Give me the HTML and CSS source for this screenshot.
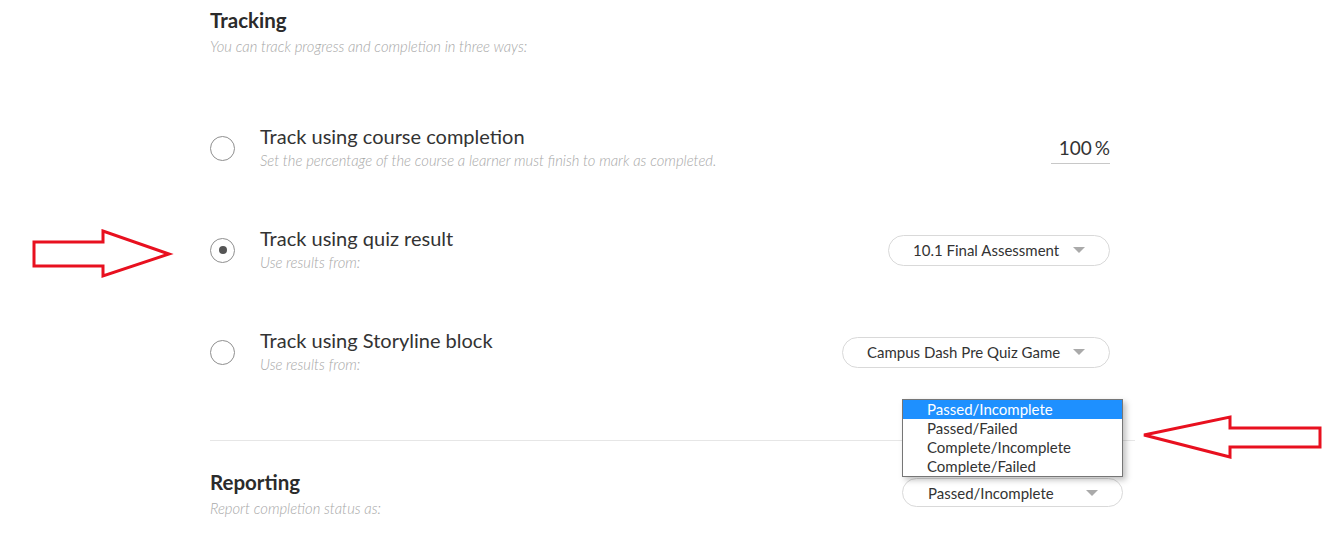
FILE: index.html
```html
<!DOCTYPE html>
<html>
<head>
<meta charset="utf-8">
<link rel="stylesheet" href="styles.css">
</head>
<body>
<div class="page">
  <section class="tracking">
    <h2 class="sec-title">Tracking</h2>
    <p class="sec-sub">You can track progress and completion in three ways:</p>
    <div class="rows">
      <div class="row">
        <span class="radio"></span>
        <div class="row-text">
          <div class="row-title">Track using course completion</div>
          <div class="row-sub">Set the percentage of the course a learner must finish to mark as completed.</div>
        </div>
        <div class="pct">100<span class="pct-sign">%</span></div>
      </div>
      <div class="row">
        <span class="radio checked"></span>
        <div class="row-text">
          <div class="row-title">Track using quiz result</div>
          <div class="row-sub">Use results from:</div>
        </div>
        <div class="select sel-quiz"><span>10.1 Final Assessment</span><i class="caret"></i></div>
      </div>
      <div class="row">
        <span class="radio"></span>
        <div class="row-text">
          <div class="row-title">Track using Storyline block</div>
          <div class="row-sub">Use results from:</div>
        </div>
        <div class="select sel-story"><span>Campus Dash Pre Quiz Game</span><i class="caret"></i></div>
      </div>
    </div>
  </section>
  <hr class="divider">
  <section class="reporting">
    <div class="rep-text">
      <h2 class="sec-title">Reporting</h2>
      <p class="sec-sub">Report completion status as:</p>
    </div>
    <div class="rep-control">
      <div class="select sel-rep"><span>Passed/Incomplete</span><i class="caret"></i></div>
      <ul class="listbox">
        <li class="hl">Passed/Incomplete</li>
        <li>Passed/Failed</li>
        <li>Complete/Incomplete</li>
        <li>Complete/Failed</li>
      </ul>
    </div>
  </section>
</div>
<svg class="arrow arrow-right" width="142" height="52" viewBox="0 0 142 52">
  <polygon points="2,13 71,13 71,2 137,25 71,47 71,37 2,37" fill="#fff" stroke="#e8101f" stroke-width="3"/>
</svg>
<svg class="arrow arrow-left" width="182" height="46" viewBox="0 0 182 46">
  <polygon points="4,20 90,2 90,13 180,13 180,32 90,32 90,42" fill="#fff" stroke="#e8101f" stroke-width="3"/>
</svg>
</body>
</html>
```
FILE: styles.css
```css
html, body {
  margin: 0;
  padding: 0;
  background: #fff;
}
body {
  font-family: Lato, "Open Sans", sans-serif;
  color: #333;
  width: 1340px;
  height: 543px;
  overflow: hidden;
  position: relative;
}
.page {
  margin-left: 210px;
  width: 925px;
}
.sec-title {
  margin: 0;
  font-size: 20.5px;
  font-weight: 700;
  line-height: 24px;
  color: #2b2b2b;
}
.sec-sub {
  margin: 4px 0 0;
  font-size: 14.8px;
  font-style: italic;
  font-weight: 300;
  color: #a8a8a8;
  line-height: 20px;
}
.tracking {
  padding-top: 8px;
}
.rows {
  margin-top: 41px;
  width: 900px;
}
.row {
  height: 102px;
  display: flex;
  align-items: center;
}
.radio {
  width: 23px;
  height: 23px;
  border: 1px solid #8f8f8f;
  border-radius: 50%;
  flex: none;
  display: flex;
  align-items: center;
  justify-content: center;
  background: #fff;
}
.radio.checked::after {
  content: "";
  width: 8px;
  height: 8px;
  border-radius: 50%;
  background: #555;
}
.row-text {
  margin-left: 25px;
  flex: 1;
}
.row-title {
  font-size: 20px;
  line-height: 24px;
  color: #333;
  margin-top: -2px;
}
.row-sub {
  font-size: 14.8px;
  font-style: italic;
  font-weight: 300;
  color: #a8a8a8;
  line-height: 20px;
  margin-top: 2px;
}
.pct {
  width: 59px;
  border-bottom: 1px solid #c8c8c8;
  text-align: right;
  font-size: 19px;
  line-height: 26px;
  color: #333;
  padding-bottom: 2px;
  margin-top: 2px;
  box-sizing: border-box;
}
.pct-sign {
  margin-left: 3px;
}
.select {
  height: 31px;
  box-sizing: border-box;
  border: 1px solid #d9d9d9;
  border-radius: 16px;
  display: flex;
  align-items: center;
  font-size: 15px;
  color: #333;
  background: #fff;
}
.select span {
  flex: 1;
}
.caret {
  width: 0;
  height: 0;
  border-left: 6px solid transparent;
  border-right: 6px solid transparent;
  border-top: 6px solid #aaa;
  margin-right: 24px;
}
.sel-quiz {
  width: 222px;
  padding-left: 24px;
}
.sel-story {
  width: 268px;
  padding-left: 24px;
}
.divider {
  margin: 37px 0 0;
  border: 0;
  border-top: 1px solid #e6e6e6;
  width: 925px;
}
.reporting {
  display: flex;
  justify-content: space-between;
  padding-top: 29px;
  width: 913px;
}
.rep-control {
  position: relative;
  margin-top: 8px;
}
.sel-rep {
  width: 221px;
  height: 29px;
  padding-left: 25px;
  border-radius: 15px;
}
.listbox {
  position: absolute;
  left: 0;
  top: -79px;
  width: 221px;
  margin: 0;
  padding: 0;
  list-style: none;
  border: 1px solid #767676;
  box-sizing: border-box;
  background: #fff;
  box-shadow: 3px 3px 6px rgba(0,0,0,0.25);
  font-size: 15px;
  color: #333;
}
.listbox li {
  height: 19px;
  line-height: 19px;
  padding-left: 24px;
}
.listbox li.hl {
  background: #1e90ff;
  color: #fff;
}
.arrow {
  position: absolute;
}
.arrow-right {
  left: 32px;
  top: 229px;
}
.arrow-left {
  left: 1140px;
  top: 415px;
}
```
